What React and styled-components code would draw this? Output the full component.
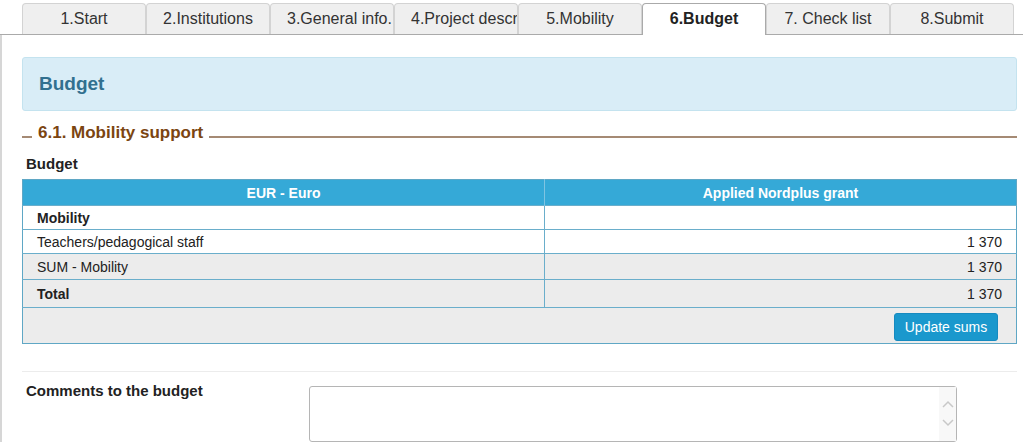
import React from "react";
import styled, { createGlobalStyle } from "styled-components";

const tabs = [
  "1.Start",
  "2.Institutions",
  "3.General info.",
  "4.Project description",
  "5.Mobility",
  "6.Budget",
  "7. Check list",
  "8.Submit",
];

const rows = [
  { label: "Mobility", value: "", bold: true, shade: false, h: 24 },
  { label: "Teachers/pedagogical staff", value: "1 370", shade: false, h: 24 },
  { label: "SUM - Mobility", value: "1 370", shade: true, h: 26 },
  { label: "Total", value: "1 370", bold: true, shade: true, h: 28 },
];

export default function App() {
  return (
    <>
      <GlobalStyle />
      <TabBar>
        {tabs.map((t) => (
          <Tab key={t} $active={t === "6.Budget"}>
            {t}
          </Tab>
        ))}
      </TabBar>
      <Content>
        <Panel>
          <PanelTitle>Budget</PanelTitle>
        </Panel>
        <Legend>
          <LegendLine $short />
          <LegendText>6.1. Mobility support</LegendText>
          <LegendLine />
        </Legend>
        <Label>Budget</Label>
        <Table>
          <thead>
            <tr>
              <Th style={{ width: 521 }}>EUR - Euro</Th>
              <Th>Applied Nordplus grant</Th>
            </tr>
          </thead>
          <tbody>
            {rows.map((r) => (
              <Tr key={r.label} $shade={r.shade} $h={r.h}>
                <Td $bold={r.bold}>{r.label}</Td>
                <Td $right>{r.value}</Td>
              </Tr>
            ))}
            <Tr $shade $h={36}>
              <ButtonCell colSpan={2}>
                <Button>Update sums</Button>
              </ButtonCell>
            </Tr>
          </tbody>
        </Table>
        <Separator />
        <CommentRow>
          <CommentLabel>Comments to the budget</CommentLabel>
          <TextBox>
            <ScrollArrows>
              <svg width="12" height="36" viewBox="0 0 12 36">
                <path d="M1 11 L6 6 L11 11" fill="none" stroke="#c8c8c8" strokeWidth="1.5" />
                <path d="M1 24 L6 29 L11 24" fill="none" stroke="#c8c8c8" strokeWidth="1.5" />
              </svg>
            </ScrollArrows>
          </TextBox>
        </CommentRow>
      </Content>
    </>
  );
}

const GlobalStyle = createGlobalStyle`
  body {
    margin: 0;
    font-family: "Liberation Sans", Arial, sans-serif;
    color: #333;
    background: #fff;
  }
`;

const TabBar = styled.div`
  display: flex;
  align-items: flex-end;
  padding: 0 0 0 22px;
  border-bottom: 1px solid #aaa;
  box-sizing: border-box;
  height: 35px;
`;

const Tab = styled.div`
  width: 124px;
  flex: none;
  box-sizing: border-box;
  height: ${(p) => (p.$active ? "32px" : "31px")};
  margin-bottom: ${(p) => (p.$active ? "-1px" : "0")};
  border: 1px solid ${(p) => (p.$active ? "#aaa" : "#d3d3d3")};
  border-bottom: none;
  border-radius: 4px 4px 0 0;
  background: ${(p) => (p.$active ? "#fff" : "#efefef")};
  font-weight: ${(p) => (p.$active ? "bold" : "normal")};
  color: ${(p) => (p.$active ? "#222" : "#333")};
  font-size: 16px;
  line-height: 30px;
  text-align: center;
  overflow: hidden;
  white-space: nowrap;
  padding: 0 16px;
`;

const Content = styled.div`
  border-left: 2px solid #d6d6d6;
  padding: 22px 6px 0 20px;
`;

const Panel = styled.div`
  background: #d9edf7;
  border: 1px solid #c4e3ef;
  border-radius: 3px;
  height: 54px;
  box-sizing: border-box;
  display: flex;
  align-items: center;
  padding-left: 16px;
`;

const PanelTitle = styled.h2`
  margin: 0;
  font-size: 19px;
  font-weight: bold;
  color: #31708f;
`;

const Legend = styled.div`
  display: flex;
  align-items: center;
  margin-top: 12px;
  height: 20px;
`;

const LegendLine = styled.div`
  height: 2px;
  background: #a58a74;
  margin-top: 8px;
  ${(p) => (p.$short ? "width: 10px;" : "flex: 1;")}
`;

const LegendText = styled.span`
  color: #7b4511;
  font-size: 17px;
  font-weight: bold;
  padding: 0 6px 0 6px;
`;

const Label = styled.div`
  font-size: 15px;
  line-height: 17px;
  font-weight: bold;
  color: #222;
  margin: 12px 0 0 4px;
`;

const Table = styled.table`
  width: 100%;
  margin-top: 7px;
  border-collapse: collapse;
  border: 1px solid #5fa7c5;
  font-size: 14px;
`;

const Th = styled.th`
  background: #35a9d7;
  color: #fff;
  font-size: 14px;
  font-weight: bold;
  height: 25px;
  padding: 0;
  border-right: 1px solid #7fc4e2;
  &:last-child {
    border-right: none;
  }
`;

const Tr = styled.tr`
  background: ${(p) => (p.$shade ? "#ececec" : "#fff")};
  height: ${(p) => p.$h}px;
  border-top: 1px solid #6aaecb;
`;

const Td = styled.td`
  padding: 0 14px;
  color: #222;
  font-weight: ${(p) => (p.$bold ? "bold" : "normal")};
  text-align: ${(p) => (p.$right ? "right" : "left")};
  border-right: 1px solid #6aaecb;
  &:last-child {
    border-right: none;
  }
`;

const ButtonCell = styled.td`
  text-align: right;
  padding: 3px 18px 0 0;
`;

const Button = styled.button`
  background: #1a98cd;
  color: #fff;
  border: 1px solid #168ac0;
  border-radius: 3px;
  font-family: "Liberation Sans", Arial, sans-serif;
  font-size: 14px;
  height: 28px;
  width: 104px;
  padding: 0;
`;

const Separator = styled.div`
  border-top: 1px solid #ececec;
  margin-top: 27px;
`;

const CommentRow = styled.div`
  display: flex;
  margin-top: 10px;
`;

const CommentLabel = styled.div`
  width: 283px;
  padding-left: 4px;
  font-size: 15px;
  line-height: 17px;
  font-weight: bold;
  color: #222;
`;

const TextBox = styled.div`
  width: 648px;
  height: 56px;
  margin-top: 4px;
  box-sizing: border-box;
  border: 1px solid #b5b5b5;
  border-radius: 3px;
  display: flex;
  justify-content: flex-end;
`;

const ScrollArrows = styled.div`
  width: 17px;
  background: #f8f8f8;
  display: flex;
  justify-content: center;
  align-items: center;
`;
